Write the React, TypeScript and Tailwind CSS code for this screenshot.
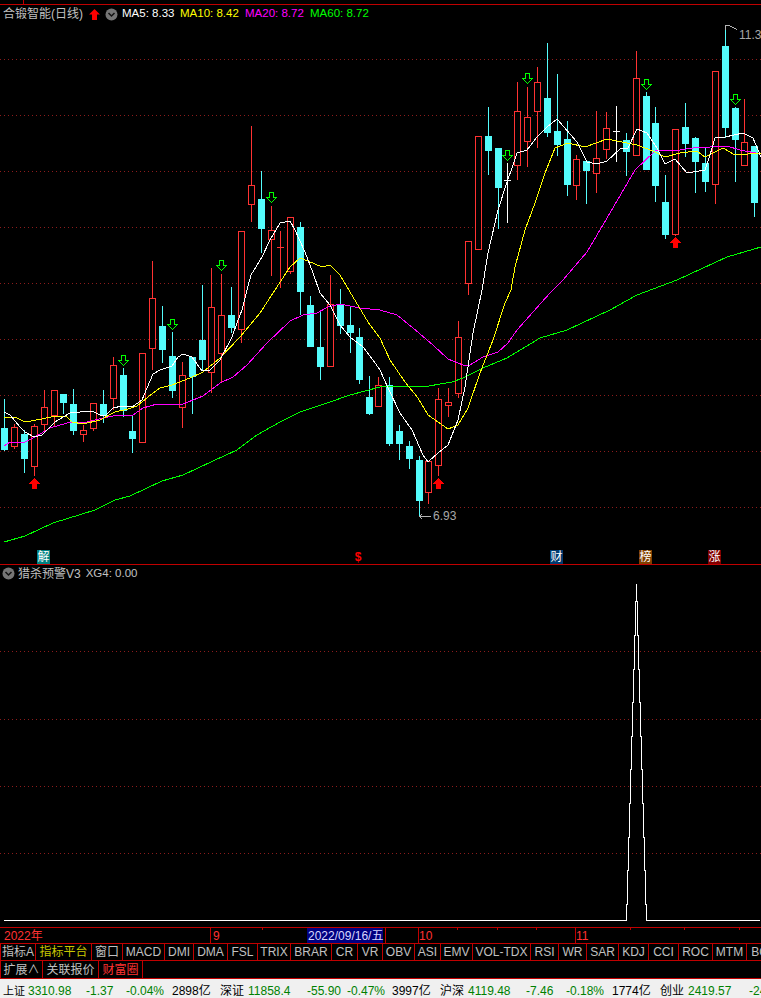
const CYAN = "#54fcfc";
const RED = "#ff3232";

// x, body top, body bottom, wick high, wick low, kind
type Candle = [number, number, number, number, number, "r" | "c" | "w"];

const CANDLES: Candle[] = [
	[4, 428, 450, 399, 451, "c"],
	[14, 427, 446, 424, 449, "r"],
	[24, 434, 459, 430, 473, "c"],
	[34, 426, 466, 424, 476, "r"],
	[44, 407, 424, 390, 433, "r"],
	[54, 390, 415, 390, 427, "r"],
	[63, 394, 403, 394, 414, "c"],
	[73, 404, 431, 389, 435, "c"],
	[83, 430, 434, 425, 442, "r"],
	[93, 403, 428, 403, 431, "r"],
	[103, 404, 416, 390, 423, "c"],
	[113, 365, 398, 357, 410, "r"],
	[123, 375, 411, 368, 417, "c"],
	[132, 431, 439, 415, 453, "c"],
	[142, 353, 442, 353, 442, "r"],
	[152, 298, 348, 261, 370, "r"],
	[162, 326, 350, 306, 363, "c"],
	[172, 356, 391, 332, 398, "c"],
	[182, 375, 407, 362, 428, "r"],
	[192, 357, 377, 357, 414, "c"],
	[202, 340, 360, 285, 370, "c"],
	[211, 307, 372, 268, 393, "r"],
	[221, 315, 353, 274, 382, "r"],
	[231, 315, 328, 287, 333, "c"],
	[241, 231, 329, 231, 343, "r"],
	[251, 185, 204, 126, 222, "r"],
	[261, 199, 229, 171, 253, "c"],
	[271, 230, 239, 206, 276, "r"],
	[280, 247, 248, 231, 288, "w"],
	[290, 217, 271, 217, 274, "r"],
	[300, 227, 292, 222, 315, "c"],
	[310, 305, 347, 296, 347, "c"],
	[320, 347, 367, 312, 380, "c"],
	[330, 304, 366, 275, 366, "r"],
	[340, 304, 326, 289, 334, "c"],
	[350, 325, 333, 307, 353, "c"],
	[359, 337, 380, 328, 384, "c"],
	[369, 397, 414, 376, 415, "c"],
	[378, 385, 406, 377, 406, "r"],
	[389, 385, 444, 377, 446, "c"],
	[399, 431, 444, 425, 460, "c"],
	[409, 446, 459, 441, 469, "c"],
	[419, 460, 501, 456, 517, "c"],
	[428, 461, 492, 461, 504, "r"],
	[438, 399, 465, 388, 476, "r"],
	[448, 402, 405, 388, 417, "r"],
	[458, 337, 393, 321, 398, "r"],
	[468, 241, 283, 241, 295, "r"],
	[478, 136, 249, 136, 249, "r"],
	[488, 136, 151, 107, 175, "c"],
	[498, 148, 188, 148, 229, "c"],
	[507, 180, 181, 163, 223, "w"],
	[517, 111, 165, 82, 180, "r"],
	[527, 117, 141, 87, 167, "r"],
	[537, 82, 111, 67, 148, "r"],
	[547, 98, 133, 43, 137, "c"],
	[557, 131, 145, 74, 156, "c"],
	[567, 139, 185, 121, 196, "c"],
	[576, 159, 185, 155, 200, "r"],
	[586, 161, 171, 161, 204, "c"],
	[596, 158, 173, 111, 193, "r"],
	[606, 128, 149, 112, 159, "r"],
	[616, 131, 132, 106, 162, "w"],
	[626, 140, 152, 133, 176, "c"],
	[636, 78, 155, 51, 156, "r"],
	[646, 96, 170, 92, 170, "c"],
	[655, 123, 186, 107, 202, "c"],
	[665, 202, 235, 175, 239, "c"],
	[675, 129, 234, 129, 236, "r"],
	[685, 127, 144, 103, 157, "c"],
	[695, 138, 162, 137, 193, "c"],
	[705, 163, 182, 148, 192, "c"],
	[715, 71, 184, 71, 204, "r"],
	[725, 46, 128, 25, 138, "c"],
	[735, 108, 140, 107, 182, "c"],
	[744, 142, 165, 99, 165, "r"],
	[754, 146, 203, 146, 217, "c"],
];

const MA5 =
	"4,412 10,415 20,427 25,432 34,437 42,435 50,427 55,422 63,417 72,412 80,412 92,411 100,415 105,416 113,408 122,406 132,407 142,400 147,388 153,374 160,370 172,366 178,357 183,354 192,357 202,371 210,370 220,360 232,337 237,323 242,310 247,290 251,275 262,257 270,240 280,223 290,221 295,230 305,252 313,273 320,293 330,305 340,325 350,337 363,347 373,360 380,370 388,388 400,413 412,430 423,455 428,462 438,453 448,445 458,420 465,387 473,333 482,290 488,253 498,210 507,182 513,165 517,153 527,150 537,137 547,127 557,119 577,142 587,162 597,164 607,161 620,149 628,148 637,129 647,133 657,148 665,164 675,159 687,173 705,170 710,155 715,138 725,137 743,133 753,138 761,157";
const MA10 =
	"4,418 15,417 25,422 42,419 55,416 67,417 72,422 83,424 100,420 115,412 128,409 137,406 153,393 160,388 172,385 190,378 203,372 220,358 240,337 260,313 273,293 290,267 300,258 308,261 322,267 330,265 340,275 353,297 368,322 380,338 390,360 405,382 418,398 428,415 448,429 458,425 468,408 480,373 493,340 505,303 511,290 515,267 525,230 535,203 545,173 555,148 568,143 585,147 607,139 637,145 653,151 665,157 680,153 697,151 705,157 723,148 735,155 761,153";
const MA20 =
	"4,446 10,442 25,442 35,437 50,428 67,423 87,422 103,418 118,415 133,415 143,408 157,404 183,404 203,396 220,383 233,377 247,365 267,343 290,321 303,315 317,313 328,307 340,304 360,308 380,310 397,315 413,328 433,345 448,359 463,365 470,365 483,357 498,352 508,343 517,330 533,312 550,293 563,280 587,252 607,218 635,170 655,151 680,150 693,148 727,146 740,150 761,154";
const MA60 =
	"4,542 25,536 53,523 95,510 115,500 130,496 162,481 183,475 213,461 237,450 257,435 280,422 300,412 330,402 350,395 380,387 400,386 423,387 452,382 463,378 483,368 507,358 540,338 567,330 610,310 637,295 677,280 727,257 761,247";

const GREEN_ARROWS = [
	[123, 355],
	[172, 319],
	[221, 260],
	[271, 192],
	[507, 150],
	[527, 73],
	[646, 79],
	[735, 94],
];
const RED_ARROWS = [
	[34, 478],
	[438, 478],
	[675, 237],
];

// stepped spike of the lower pane, the steps are one pixel wide
const SPIKE_YS = [920.5, 904, 870, 837, 803, 769, 736, 702, 669, 635, 601, 584];
const spikePoints = () => {
	const left: string[] = [];
	const right: string[] = [];
	SPIKE_YS.forEach((y, i) => {
		const lx = 626.5 + i;
		const rx = 646.5 - i;
		if (i < SPIKE_YS.length - 1) {
			const next = SPIKE_YS[i + 1];
			left.push(`${lx},${y} ${lx},${next}`);
			right.unshift(`${rx},${next} ${rx},${y}`);
		}
	});
	return ["4,920.5", ...left, ...right, "760,920.5"].join(" ");
};

const TABS_ROW1 = [
	{ label: "指标A", w: "w-[35px]" },
	{ label: "指标平台", w: "w-[56px]", tone: "text-[#c8c800]" },
	{ label: "窗口", w: "w-[31px]" },
	{ label: "MACD", w: "w-[42px]" },
	{ label: "DMI", w: "w-[29px]" },
	{ label: "DMA", w: "w-[34px]" },
	{ label: "FSL", w: "w-[30px]" },
	{ label: "TRIX", w: "w-[33px]" },
	{ label: "BRAR", w: "w-[41px]" },
	{ label: "CR", w: "w-[26px]" },
	{ label: "VR", w: "w-[25px]" },
	{ label: "OBV", w: "w-[32px]" },
	{ label: "ASI", w: "w-[26px]" },
	{ label: "EMV", w: "w-[32px]" },
	{ label: "VOL-TDX", w: "w-[58px]" },
	{ label: "RSI", w: "w-[28px]" },
	{ label: "WR", w: "w-[28px]" },
	{ label: "SAR", w: "w-[32px]" },
	{ label: "KDJ", w: "w-[30px]" },
	{ label: "CCI", w: "w-[30px]" },
	{ label: "ROC", w: "w-[34px]" },
	{ label: "MTM", w: "w-[34px]" },
	{ label: "BOLL", w: "w-[40px]" },
];

const TABS_ROW2 = [
	{ label: "扩展∧", w: "w-[42px]" },
	{ label: "关联报价", w: "w-[56px]" },
	{ label: "财富圈", w: "w-[44px]", tone: "text-[#ff3232]" },
];

const STATUS = [
	{ text: "上证", w: "w-[25px]", tone: "text-black text-[11px]" },
	{ text: "3310.98", w: "w-[58px]", tone: "text-[#008000]" },
	{ text: "-1.37", w: "w-[40px]", tone: "text-[#008000]" },
	{ text: "-0.04%", w: "w-[46px]", tone: "text-[#008000]" },
	{ text: "2898亿", w: "w-[48px]", tone: "text-black" },
	{ text: "深证", w: "w-[28px]", tone: "text-black" },
	{ text: "11858.4", w: "w-[59px]", tone: "text-[#008000]" },
	{ text: "-55.90", w: "w-[40px]", tone: "text-[#008000]" },
	{ text: "-0.47%", w: "w-[45px]", tone: "text-[#008000]" },
	{ text: "3997亿", w: "w-[48px]", tone: "text-black" },
	{ text: "沪深", w: "w-[28px]", tone: "text-black" },
	{ text: "4119.48", w: "w-[58px]", tone: "text-[#008000]" },
	{ text: "-7.46", w: "w-[40px]", tone: "text-[#008000]" },
	{ text: "-0.18%", w: "w-[46px]", tone: "text-[#008000]" },
	{ text: "1774亿", w: "w-[48px]", tone: "text-black" },
	{ text: "创业", w: "w-[28px]", tone: "text-black" },
	{ text: "2419.57", w: "w-[61px]", tone: "text-[#008000]" },
	{ text: "-24.52", w: "w-[40px]", tone: "text-[#008000]" },
];

const AXIS_TICKS = [
	"left-[262px]",
	"left-[457px]",
	"left-[497px]",
	"left-[536px]",
	"left-[630px]",
	"left-[684px]",
	"left-[739px]",
];

function CandleMark({ c }: { c: Candle }) {
	const [x, top, bottom, hi, lo, kind] = c;
	const cx = x + 0.5;
	if (kind === "c") {
		return (
			<g>
				<line x1={cx} x2={cx} y1={hi} y2={lo} stroke={CYAN} />
				<rect x={x - 3} y={top} width={7} height={bottom - top} fill={CYAN} />
			</g>
		);
	}
	if (kind === "w") {
		return (
			<g>
				<line x1={cx} x2={cx} y1={hi} y2={lo} stroke={x === 280 ? RED : "#ffffff"} />
				<line x1={x - 3} x2={x + 4} y1={top + 0.5} y2={top + 0.5} stroke={x === 280 ? RED : "#ffffff"} />
			</g>
		);
	}
	return (
		<g>
			<line x1={cx} x2={cx} y1={hi} y2={top} stroke={RED} />
			<line x1={cx} x2={cx} y1={bottom} y2={lo} stroke={RED} />
			<rect x={x - 2.5} y={top + 0.5} width={6} height={bottom - top} fill="#000" stroke={RED} />
		</g>
	);
}

function GreenArrow({ x, y }: { x: number; y: number }) {
	const c = x + 0.5;
	return (
		<polygon
			points={`${c - 2},${y + 0.5} ${c + 2},${y + 0.5} ${c + 2},${y + 5.5} ${c + 5},${y + 5.5} ${c},${y + 10.5} ${c - 5},${y + 5.5} ${c - 2},${y + 5.5}`}
			fill="none"
			stroke="#00ff00"
		/>
	);
}

function RedArrow({ x, y }: { x: number; y: number }) {
	const c = x + 0.5;
	return (
		<polygon
			points={`${c},${y} ${c + 5.5},${y + 5.5} ${c + 2.5},${y + 5.5} ${c + 2.5},${y + 11} ${c - 2.5},${y + 11} ${c - 2.5},${y + 5.5} ${c - 5.5},${y + 5.5}`}
			fill="#ff0000"
		/>
	);
}

function GridLine({ y }: { y: number }) {
	return <line x1={0} x2={761} y1={y + 0.5} y2={y + 0.5} stroke="#8c1c1c" strokeDasharray="1 3" />;
}

function Chevron() {
	return (
		<svg width="13" height="13" viewBox="0 0 13 13" className="shrink-0">
			<circle cx="6.5" cy="6.5" r="6" fill="#757575" />
			<path d="M3.5 5 L6.5 8 L9.5 5" fill="none" stroke="#111" strokeWidth="1.5" />
		</svg>
	);
}

function Tab({ label, w, tone }: { label: string; w: string; tone?: string }) {
	return (
		<div className={`${w} flex shrink-0 items-center justify-center border-r border-[#c00000] ${tone ?? "text-[#c0c0c0]"}`}>
			{label}
		</div>
	);
}

export default function App() {
	return (
		<div className="flex h-[998px] w-[761px] flex-col overflow-hidden bg-black text-[12px] leading-none text-[#c0c0c0] [font-family:'Liberation_Sans','Noto_Sans_CJK_SC',sans-serif]">
			{/* top strip with the little tab stub */}
			<div className="h-[5px] shrink-0 border-b border-[#c00000]">
				<div className="h-full w-[24px] border-r border-[#c00000]" />
			</div>

			{/* price pane */}
			<div className="relative h-[560px] shrink-0 border-b border-[#c00000]">
				<svg className="absolute inset-0" width="761" height="559" viewBox="0 5 761 559" shapeRendering="crispEdges">
					{[59, 115, 171, 227, 283, 339, 395, 451, 507].map((y) => (
						<GridLine key={y} y={y} />
					))}
					{CANDLES.map((c) => (
						<CandleMark key={c[0]} c={c} />
					))}
					<polyline points={MA60} fill="none" stroke="#00ff00" />
					<polyline points={MA20} fill="none" stroke="#ff00ff" />
					<polyline points={MA10} fill="none" stroke="#ffff00" />
					<polyline points={MA5} fill="none" stroke="#ffffff" />
					{GREEN_ARROWS.map(([x, y]) => (
						<GreenArrow key={x} x={x} y={y} />
					))}
					{RED_ARROWS.map(([x, y]) => (
						<RedArrow key={x} x={x} y={y} />
					))}
					<path d="M725.5 25 V30 M725.5 25.5 H729 L737 29.5" fill="none" stroke="#b4b4b4" />
					<path d="M419.5 516.5 H431 M419.5 516.5 L422 514 M419.5 516.5 L422 519" fill="none" stroke="#b4b4b4" />
				</svg>
				<span className="absolute top-[24px] left-[739px] text-[#a8a8a8]">11.33</span>
				<span className="absolute top-[505px] left-[433px] text-[#a8a8a8]">6.93</span>

				<div className="relative flex h-[18px] items-center pl-[3px]">
					<span className="w-[86px] shrink-0 whitespace-nowrap">合锻智能(日线)</span>
					<svg width="11" height="11" viewBox="0 0 11 11" className="mr-[5px] shrink-0">
						<polygon points="5.5,0 11,5.5 8,5.5 8,11 3,11 3,5.5 0,5.5" fill="#ff0000" />
					</svg>
					<Chevron />
					<span className="ml-[4px] w-[58px] shrink-0 text-[11.5px] whitespace-nowrap text-white">MA5: 8.33</span>
					<span className="w-[65px] shrink-0 text-[11.5px] whitespace-nowrap text-[#ffff00]">MA10: 8.42</span>
					<span className="w-[65px] shrink-0 text-[11.5px] whitespace-nowrap text-[#ff00ff]">MA20: 8.72</span>
					<span className="text-[11.5px] whitespace-nowrap text-[#00ff00]">MA60: 8.72</span>
				</div>

				<span className="absolute bottom-0 left-[37px] flex h-[14px] w-[13px] items-center justify-center bg-[#008080] text-white">解</span>
				<span className="absolute bottom-0 left-[352px] flex h-[14px] w-[12px] items-center justify-center font-bold text-[#ff0000]">$</span>
				<span className="absolute bottom-0 left-[550px] flex h-[14px] w-[13px] items-center justify-center bg-[#003a70] text-white">财</span>
				<span className="absolute bottom-0 left-[639px] flex h-[14px] w-[13px] items-center justify-center bg-[#804000] text-white">榜</span>
				<span className="absolute bottom-0 left-[708px] flex h-[14px] w-[13px] items-center justify-center bg-[#800000] text-white">涨</span>
			</div>

			{/* indicator pane */}
			<div className="relative h-[362px] shrink-0">
				<svg className="absolute inset-0" width="761" height="362" viewBox="0 565 761 362" shapeRendering="crispEdges">
					{[651, 719, 786, 853].map((y) => (
						<GridLine key={y} y={y} />
					))}
					<polyline points={spikePoints()} fill="none" stroke="#ffffff" />
				</svg>
				<div className="relative flex h-[17px] items-center gap-[3px] pl-[2px]">
					<Chevron />
					<span className="whitespace-nowrap">猎杀预警V3</span>
					<span className="ml-[2px] text-[11.5px] whitespace-nowrap">XG4: 0.00</span>
				</div>
			</div>

			{/* date axis */}
			<div className="relative flex h-[17px] shrink-0 items-center border-y border-[#c00000] text-[#ff3232]">
				<div className="flex h-full w-[211px] shrink-0 items-center border-r border-[#c00000] pl-[4px]">2022年</div>
				<div className="flex h-full w-[96px] shrink-0 items-center pl-[2px]">9</div>
				<div className="flex h-full w-[76px] shrink-0 items-center whitespace-nowrap bg-[#000080] pl-[1px] text-[#d8d8ff]">2022/09/16/五</div>
				<div className="h-full w-[3px] shrink-0 border-r border-[#c00000]" />
				<div className="h-full w-[33px] shrink-0 border-r border-[#c00000]" />
				<div className="flex h-full w-[157px] shrink-0 items-center border-r border-[#c00000]">10</div>
				<div className="flex h-full items-center">11</div>
				{AXIS_TICKS.map((left) => (
					<div key={left} className={`absolute top-0 h-[2px] w-px bg-[#c00000] ${left}`} />
				))}
			</div>

			{/* indicator tabs */}
			<div className="flex h-[17px] shrink-0 border-b border-l border-[#c00000]">
				{TABS_ROW1.map((t) => (
					<Tab key={t.label} {...t} />
				))}
			</div>
			<div className="flex h-[18px] shrink-0 border-b border-l border-[#c00000]">
				{TABS_ROW2.map((t) => (
					<Tab key={t.label} {...t} />
				))}
			</div>

			{/* index ticker */}
			<div className="flex min-h-0 flex-1 items-end overflow-hidden bg-[#f0f0f0] pb-[1px] pl-[3px] whitespace-nowrap">
				{STATUS.map((s) => (
					<span key={s.text} className={`${s.w} shrink-0 ${s.tone}`}>
						{s.text}
					</span>
				))}
			</div>
		</div>
	);
}
